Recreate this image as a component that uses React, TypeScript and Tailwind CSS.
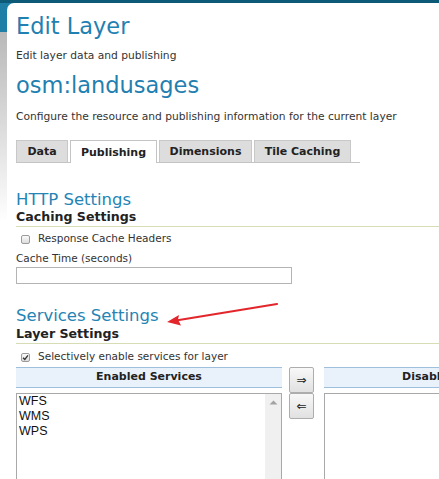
import React from "react";

function Box({ checked }: { checked?: boolean }) {
  return (
    <span className="inline-flex items-center justify-center w-[9px] h-[9px] rounded-[2px] border border-[#9c9c9c] bg-linear-to-b from-[#fbfbfb] to-[#dcdcdc]">
      {checked && (
        <svg width="7" height="7" viewBox="0 0 8 8">
          <path d="M1.2 4.2 L3.2 6.2 L6.8 1.6" fill="none" stroke="#333" strokeWidth="1.5" />
        </svg>
      )}
    </span>
  );
}

const tabs = [
  { label: "Data", w: "w-[52px]", active: false },
  { label: "Publishing", w: "w-[87px]", active: true },
  { label: "Dimensions", w: "w-[93px]", active: false },
  { label: "Tile Caching", w: "w-[97px]", active: false },
];

export default function App() {
  return (
    <div className="relative w-[439px] h-[479px] overflow-hidden bg-white font-['DejaVu_Sans',sans-serif] text-[#333]">
      <div className="h-[3px] bg-[#0c5a78]" />
      <div className="flex bg-[#1f7ea6] h-[476px]">
        {/* left shadow strip */}
        <div className="w-[7px] shrink-0 flex flex-col">
          <div className="h-[29px]" />
          <div className="h-[190px] bg-linear-to-b from-[#b9b9b9] to-white" />
          <div className="flex-1 bg-white" />
        </div>

        <div className="w-[700px] shrink-0 bg-white rounded-tl-[7px] pl-[9px]">
          <h1 className="mt-[9px] text-[22.5px] leading-[28px] text-[#1f80b1]">Edit Layer</h1>
          <p className="mt-[9px] text-[10.7px] leading-[14px]">Edit layer data and publishing</p>
          <h2 className="mt-[8px] text-[22.5px] leading-[28px] text-[#1f80b1]">osm:landusages</h2>
          <p className="mt-[11px] text-[10.7px] leading-[14px]">
            Configure the resource and publishing information for the current layer
          </p>

          {/* tabs */}
          <div className="mt-[16px] w-[344px] h-[23px] flex items-end gap-[2px] border-b border-[#c4c4c4]">
            {tabs.map((t) => (
              <div
                key={t.label}
                className={
                  t.active
                    ? `${t.w} h-[23px] -mb-px pt-[2px] bg-white border border-b-0 border-[#c4c4c4] flex items-center justify-center text-[11px] font-bold text-[#222]`
                    : `${t.w} h-[22px] pt-[2px] bg-[#dddddd] border border-b-0 border-[#c8c8c8] flex items-center justify-center text-[11px] font-bold text-[#222]`
                }
              >
                {t.label}
              </div>
            ))}
          </div>

          {/* HTTP settings */}
          <h3 className="mt-[28px] text-[16.5px] leading-[18px] text-[#2484b5]">HTTP Settings</h3>
          <h4 className="w-[423px] text-[12.6px] leading-[16px] font-bold text-[#222] pb-[1px] border-b border-[#d6ddb4]">
            Caching Settings
          </h4>
          <label className="mt-[5px] flex items-center h-[14px] text-[10.5px]">
            <span className="ml-[5px] mr-[8px] flex">
              <Box />
            </span>
            Response Cache Headers
          </label>
          <p className="mt-[5px] text-[10.5px] leading-[14px]">Cache Time (seconds)</p>
          <div className="mt-[2px] w-[276px] h-[17px] border border-[#b4b4b4] bg-white" />

          {/* Services settings */}
          <h3 className="mt-[23px] text-[16.5px] leading-[18px] text-[#2484b5]">Services Settings</h3>
          <h4 className="mt-[1px] w-[423px] text-[12.6px] leading-[16px] font-bold text-[#222] pb-[1px] border-b border-[#d6ddb4]">
            Layer Settings
          </h4>
          <label className="mt-[6px] flex items-center h-[14px] text-[10.5px]">
            <span className="ml-[5px] mr-[8px] flex">
              <Box checked />
            </span>
            Selectively enable services for layer
          </label>

          {/* palette */}
          <div className="mt-[3px] flex">
            <div className="w-[266px] shrink-0">
              <div className="h-[21px] bg-[#e9f2fb] border-t border-b border-[#9fc0dd] flex items-center justify-center text-[11px] font-bold text-[#222]">
                Enabled Services
              </div>
              <div className="mt-[5px] h-[100px] border border-[#a9a9a9] flex font-['Liberation_Sans',sans-serif] text-[12.5px] text-[#111]">
                <div className="flex-1 pl-[2px]">
                  <div className="leading-[15px]">WFS</div>
                  <div className="leading-[15px]">WMS</div>
                  <div className="leading-[15px]">WPS</div>
                </div>
                <div className="w-[16px] bg-[#f0f0f0] flex justify-center pt-[6px]">
                  <svg width="9" height="5" viewBox="0 0 9 5">
                    <path d="M0.5 4.5 L4.5 0.5 L8.5 4.5 Z" fill="#a3a3a3" />
                  </svg>
                </div>
              </div>
            </div>

            <div className="ml-[7px] w-[25px] shrink-0 flex flex-col">
              <button className="h-[26px] rounded-[2px] border border-[#adadad] bg-linear-to-b from-[#f8f8f8] to-[#e1e1e1] text-[12px] leading-none text-[#222]">
                ⇒
              </button>
              <button className="h-[26px] rounded-[2px] border border-[#adadad] bg-linear-to-b from-[#f8f8f8] to-[#e1e1e1] text-[12px] leading-none text-[#222]">
                ⇐
              </button>
            </div>

            <div className="ml-[10px] w-[266px] shrink-0">
              <div className="h-[21px] bg-[#e9f2fb] border-t border-b border-[#9fc0dd] flex items-center justify-center text-[11px] font-bold text-[#222]">
                Disabled Services
              </div>
              <div className="mt-[5px] h-[100px] border border-[#a9a9a9]" />
            </div>
          </div>
        </div>
      </div>

      {/* annotation arrow */}
      <svg className="absolute left-0 top-0 pointer-events-none" width="439" height="479">
        <line x1="277" y1="304" x2="176" y2="320.5" stroke="#e3262b" strokeWidth="2.2" strokeLinecap="round" />
        <path d="M167 322 L179 315 L178 319.5 L181 325.5 Z" fill="#e3262b" />
      </svg>
    </div>
  );
}
